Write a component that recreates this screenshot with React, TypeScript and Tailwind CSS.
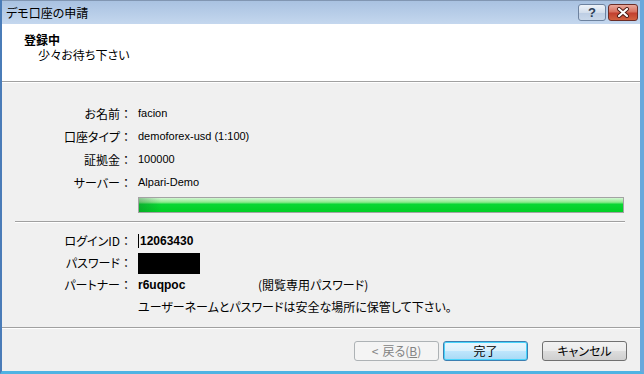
import type { ReactNode } from "react";

const jp = "font-['Noto_Sans_CJK_JP','Liberation_Sans',sans-serif] [font-feature-settings:'palt']";
const latin = "font-['Liberation_Sans','Noto_Sans_CJK_JP',sans-serif]";

function InfoRow({ label, children, tall }: { label?: string; children: ReactNode; tall?: boolean }) {
  return (
    <div className={tall ? "flex h-[23px] items-center" : "flex h-[22px] items-center"}>
      <div className="w-[118px] text-right">{label}</div>
      <div className="w-[12px] text-center">{label ? "：" : ""}</div>
      <div className="ml-[6px] flex items-center">{children}</div>
    </div>
  );
}

function DialogButton({ children, kind }: { children: ReactNode; kind: "normal" | "default" | "disabled" }) {
  const styles = {
    normal:
      "border-[#707070] bg-[linear-gradient(#f2f2f2_0%,#ebebeb_50%,#dddddd_51%,#cfcfcf_100%)] text-black",
    default:
      "border-[#3c7fb1] bg-[linear-gradient(#eaf6fd_0%,#d9f0fc_50%,#bee6fd_51%,#a7d9f5_100%)] text-black shadow-[inset_0_0_0_1px_#48d4fb]",
    disabled: "border-[#adb2b5] bg-[#f4f4f4] text-[#838383]",
  };
  return (
    <div
      className={`flex h-[20px] w-[85px] items-center justify-center rounded-[3px] border text-[12px] ${styles[kind]}`}
    >
      {children}
    </div>
  );
}

export default function App() {
  return (
    <div
      className={`flex h-[374px] w-[644px] flex-col border-b-[3px] border-l-2 border-r-4 border-b-[#4fb3e3] border-l-[#4a7cb8] border-r-[#6aa8dc] text-[12px] text-black ${jp}`}
    >
      {/* title bar */}
      <div className="flex h-[24px] items-center border-t border-[#8196b2] bg-[linear-gradient(#a9c2e1,#c4d7ee)] pl-[4px] pr-[2px]">
        <span className="flex-1 leading-none">デモ口座の申請</span>
        <div className="flex items-center gap-[2px]">
          <div className="flex h-[17px] w-[28px] items-center justify-center rounded-[3px] border border-[#6d829f] bg-[linear-gradient(#eef3f9_0%,#d3deec_50%,#bccde3_51%,#c9d8ea_100%)]">
            <span className={`text-[13px] font-bold leading-none text-[#2c3e57] ${latin}`}>?</span>
          </div>
          <div className="flex h-[17px] w-[30px] items-center justify-center rounded-[3px] border border-[#6b2d27] bg-[linear-gradient(#e9a99c_0%,#d7715f_45%,#c2402f_55%,#d2613f_100%)]">
            <svg width="14" height="11" viewBox="0 0 14 11">
              <path d="M3 2 L11 9 M11 2 L3 9" stroke="#4a1a14" strokeWidth="4" strokeLinecap="round" />
              <path d="M3 2 L11 9 M11 2 L3 9" stroke="#ffffff" strokeWidth="2.2" strokeLinecap="round" />
            </svg>
          </div>
        </div>
      </div>

      {/* header */}
      <div className="h-[57px] bg-white pl-[22px] pt-[8px]">
        <div className="font-bold leading-[16px]">登録中</div>
        <div className="pl-[14px] leading-[14px]">少々お待ち下さい</div>
      </div>
      <div className="h-px bg-[#a0a0a0]" />
      <div className="h-px bg-white" />

      {/* body */}
      <div className="flex flex-1 flex-col bg-[#f0f0f0] pt-[19px]">
        <InfoRow label="お名前" tall>
          <span className={`text-[11px] ${latin}`}>facion</span>
        </InfoRow>
        <InfoRow label="口座タイプ" tall>
          <span className={`text-[11px] ${latin}`}>demoforex-usd (1:100)</span>
        </InfoRow>
        <InfoRow label="証拠金" tall>
          <span className={`text-[11px] ${latin}`}>100000</span>
        </InfoRow>
        <InfoRow label="サーバー" tall>
          <span className={`text-[11px] ${latin}`}>Alpari-Demo</span>
        </InfoRow>

        <div className="ml-[136px] mt-[3px] h-[16px] w-[486px] border border-[#a3a3a3] bg-[linear-gradient(#d4f7d4_0%,#8eea8e_30%,#0ad634_45%,#00cf24_100%)]">
          <div className="h-full w-[22px] bg-[linear-gradient(90deg,rgba(20,110,40,0.35),rgba(20,110,40,0))]" />
        </div>

        <div className="ml-[13px] mt-[8px] h-px w-[610px] bg-[#a0a0a0]" />
        <div className="ml-[13px] h-px w-[610px] bg-white" />

        <div className="mt-[7px] flex flex-col">
          <InfoRow label="ログインID">
            <span className="mr-[1px] h-[14px] w-px bg-black" />
            <span className={`font-bold ${latin}`}>12063430</span>
          </InfoRow>
          <InfoRow label="パスワード">
            <div className="h-[21px] w-[62px] bg-black" />
          </InfoRow>
          <InfoRow label="パートナー">
            <span className={`w-[120px] font-bold ${latin}`}>r6uqpoc</span>
            <span>(閲覧専用パスワード)</span>
          </InfoRow>
          <InfoRow>
            <span>ユーザーネームとパスワードは安全な場所に保管して下さい。</span>
          </InfoRow>
        </div>

        <div className="mt-[9px] h-px bg-[#a0a0a0]" />
        <div className="h-px bg-white" />

        <div className="mt-[12px] flex justify-end pr-[13px]">
          <DialogButton kind="disabled">
            <span className="mr-[4px]">&lt;</span>戻る(<span className="underline">B</span>)
          </DialogButton>
          <div className="ml-[4px]">
            <DialogButton kind="default">完了</DialogButton>
          </div>
          <div className="ml-[14px]">
            <DialogButton kind="normal">キャンセル</DialogButton>
          </div>
        </div>
      </div>
    </div>
  );
}
